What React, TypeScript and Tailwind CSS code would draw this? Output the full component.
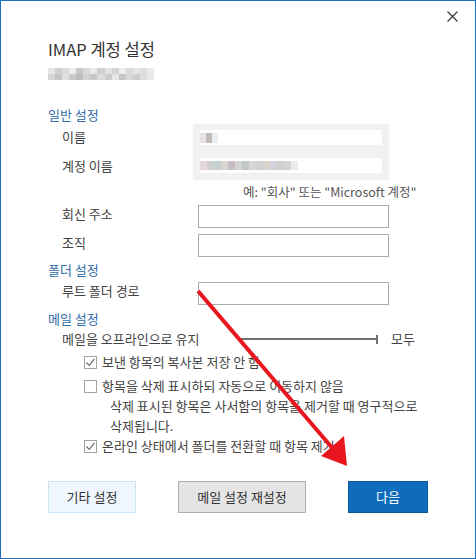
import React from 'react';

const emailTop = ['bg-[#e6e6e6]', 'bg-[#d0d0d0]', 'bg-[#dcdcdc]', 'bg-[#ececec]', 'bg-[#c9c9c9]', 'bg-[#d8d8d8]', 'bg-[#e9e9e9]', 'bg-[#cfcfcf]', 'bg-[#e2e2e2]', 'bg-[#d4d4d4]', 'bg-[#eeeeee]', 'bg-[#d9d9d9]', 'bg-[#e4e4e4]', 'bg-[#dddddd]', 'bg-[#ebebeb]'];
const emailBottom = ['bg-[#d6d6d6]', 'bg-[#c4c4c4]', 'bg-[#e0e0e0]', 'bg-[#cbcbcb]', 'bg-[#bdbdbd]', 'bg-[#d2d2d2]', 'bg-[#c8c8c8]', 'bg-[#dadada]', 'bg-[#cdcdcd]', 'bg-[#e5e5e5]', 'bg-[#c6c6c6]', 'bg-[#d8d8d8]', 'bg-[#cecece]', 'bg-[#dedede]', 'bg-[#e8e8e8]'];
const nameBlur = ['bg-[#e8e2e2]', 'bg-[#c2bcbc]', 'bg-[#ecedf3]'];
const accountBlur = ['bg-[#e6d8dc]', 'bg-[#cfcfcf]', 'bg-[#c5cfd6]', 'bg-[#d9d4cc]', 'bg-[#c8bcc6]', 'bg-[#d4d4d4]', 'bg-[#bfc8c4]', 'bg-[#d6d6d6]', 'bg-[#d0d0d0]', 'bg-[#d8d6cc]', 'bg-[#d5cfdc]', 'bg-[#cfcfcf]', 'bg-[#d8d4d4]', 'bg-[#ececec]'];

function Check({ checked }: { checked?: boolean }) {
  return (
    <span className="w-[13px] h-[13px] border border-[#a3a3a3] bg-white flex items-center justify-center shrink-0">
      {checked && (
        <svg width="11" height="11" viewBox="0 0 11 11">
          <path d="M1.5 5.5 L4.2 8.3 L9.5 1.8" fill="none" stroke="#6a6a6a" strokeWidth="1.2" />
        </svg>
      )}
    </span>
  );
}

function Field({ label }: { label: string }) {
  return (
    <div className="flex items-start h-[26px]">
      <span className="w-[150px] pl-[14px] leading-[20px]">{label}</span>
      <div className="w-[191px] h-[23px] mt-[1px] border border-[#ababab] bg-white" />
    </div>
  );
}

export default function App() {
  return (
    <div className="relative w-[476px] h-[559px] border border-[#1a6fc4] bg-white text-[13px] text-[#444] font-['Noto_Sans_CJK_KR',sans-serif] overflow-hidden">
      <div className="h-[30px] flex justify-end items-center pr-[17px]">
        <svg width="11" height="11" viewBox="0 0 11 11">
          <path d="M0.5 0.5 L10.5 10.5 M10.5 0.5 L0.5 10.5" stroke="#333" strokeWidth="1.1" />
        </svg>
      </div>

      <div className="pl-[47px]">
        <h1 className="mt-[6px] h-[24px] leading-[24px] text-[16.5px] text-[#333]">IMAP 계정 설정</h1>

        <div className="mt-[7px] w-[106px] h-[12px] flex flex-col">
          <div className="flex h-[6px]">
            {emailTop.map((c, i) => <span key={i} className={`flex-1 ${c}`} />)}
          </div>
          <div className="flex h-[6px]">
            {emailBottom.map((c, i) => <span key={i} className={`flex-1 ${c}`} />)}
          </div>
        </div>

        <div className="mt-[26px] h-[18px] leading-[18px] text-[#2f6ca8]">일반 설정</div>

        <div className="flex">
          <div className="w-[145px] pl-[14px] flex flex-col">
            <span className="h-[26px] leading-[26px]">이름</span>
            <span className="h-[32px] leading-[32px]">계정 이름</span>
          </div>
          <div className="w-[196px] h-[56px] bg-[#f1f1f1] flex flex-col pt-[6px] gap-[13px]">
            <div className="ml-[7px] w-[182px] h-[15px] bg-white flex items-center">
              {nameBlur.map((c, i) => <span key={i} className={`w-[6px] h-[10px] ${c}`} />)}
            </div>
            <div className="ml-[7px] w-[182px] h-[15px] bg-white flex items-center">
              {accountBlur.map((c, i) => <span key={i} className={`w-[7px] h-[9px] ${c}`} />)}
            </div>
          </div>
        </div>

        <div className="mt-[2px] h-[16px] leading-[16px] pl-[195px] text-[12.5px] text-[#555] whitespace-nowrap">예: "회사" 또는 "Microsoft 계정"</div>

        <div className="mt-[4px]">
          <Field label="회신 주소" />
        </div>
        <div className="mt-[3px]">
          <Field label="조직" />
        </div>

        <div className="mt-[2px] h-[18px] leading-[18px] text-[#2f6ca8]">폴더 설정</div>
        <div className="mt-[2px]">
          <Field label="루트 폴더 경로" />
        </div>

        <div className="mt-[3px] h-[18px] leading-[18px] text-[#2f6ca8]">메일 설정</div>

        <div className="mt-[1px] h-[20px] flex items-center pl-[14px]">
          <span className="w-[176px]">메일을 오프라인으로 유지</span>
          <div className="w-[140px] h-[9px] flex items-center">
            <div className="flex-1 h-[2px] bg-[#707070]" />
            <div className="w-[2px] h-[9px] bg-[#707070]" />
          </div>
          <span className="ml-[13px]">모두</span>
        </div>

        <div className="mt-[3px] h-[20px] flex items-center gap-[5px] pl-[36px]">
          <Check checked />
          <span>보낸 항목의 복사본 저장 안 함</span>
        </div>
        <div className="mt-[4px] h-[20px] flex items-center gap-[5px] pl-[36px]">
          <Check />
          <span>항목을 삭제 표시하되 자동으로 이동하지 않음</span>
        </div>
        <div className="pl-[62px] leading-[20px] whitespace-nowrap">
          삭제 표시된 항목은 사서함의 항목을 제거할 때 영구적으로
          <br />
          삭제됩니다.
        </div>
        <div className="h-[20px] flex items-center gap-[5px] pl-[36px]">
          <Check checked />
          <span>온라인 상태에서 폴더를 전환할 때 항목 제거</span>
        </div>

        <div className="mt-[25px] flex gap-[42px] text-[13px]">
          <button className="w-[88px] h-[32px] bg-[#eff6fd] border border-[#cde3f6] text-[#333]">기타 설정</button>
          <button className="w-[128px] h-[32px] bg-[#e5e5e5] border border-[#adadad] text-[#333]">메일 설정 재설정</button>
          <button className="w-[80px] h-[32px] bg-[#0f6cbd] border border-[#0b5a9e] text-white">다음</button>
        </div>
      </div>

      <svg className="absolute -left-px -top-px pointer-events-none" width="476" height="559" viewBox="0 0 476 559">
        <line x1="198" y1="291" x2="334" y2="450" stroke="#e8161e" strokeWidth="4" />
        <polygon points="347,466 321,456 344,436" fill="#e8161e" />
      </svg>
    </div>
  );
}
